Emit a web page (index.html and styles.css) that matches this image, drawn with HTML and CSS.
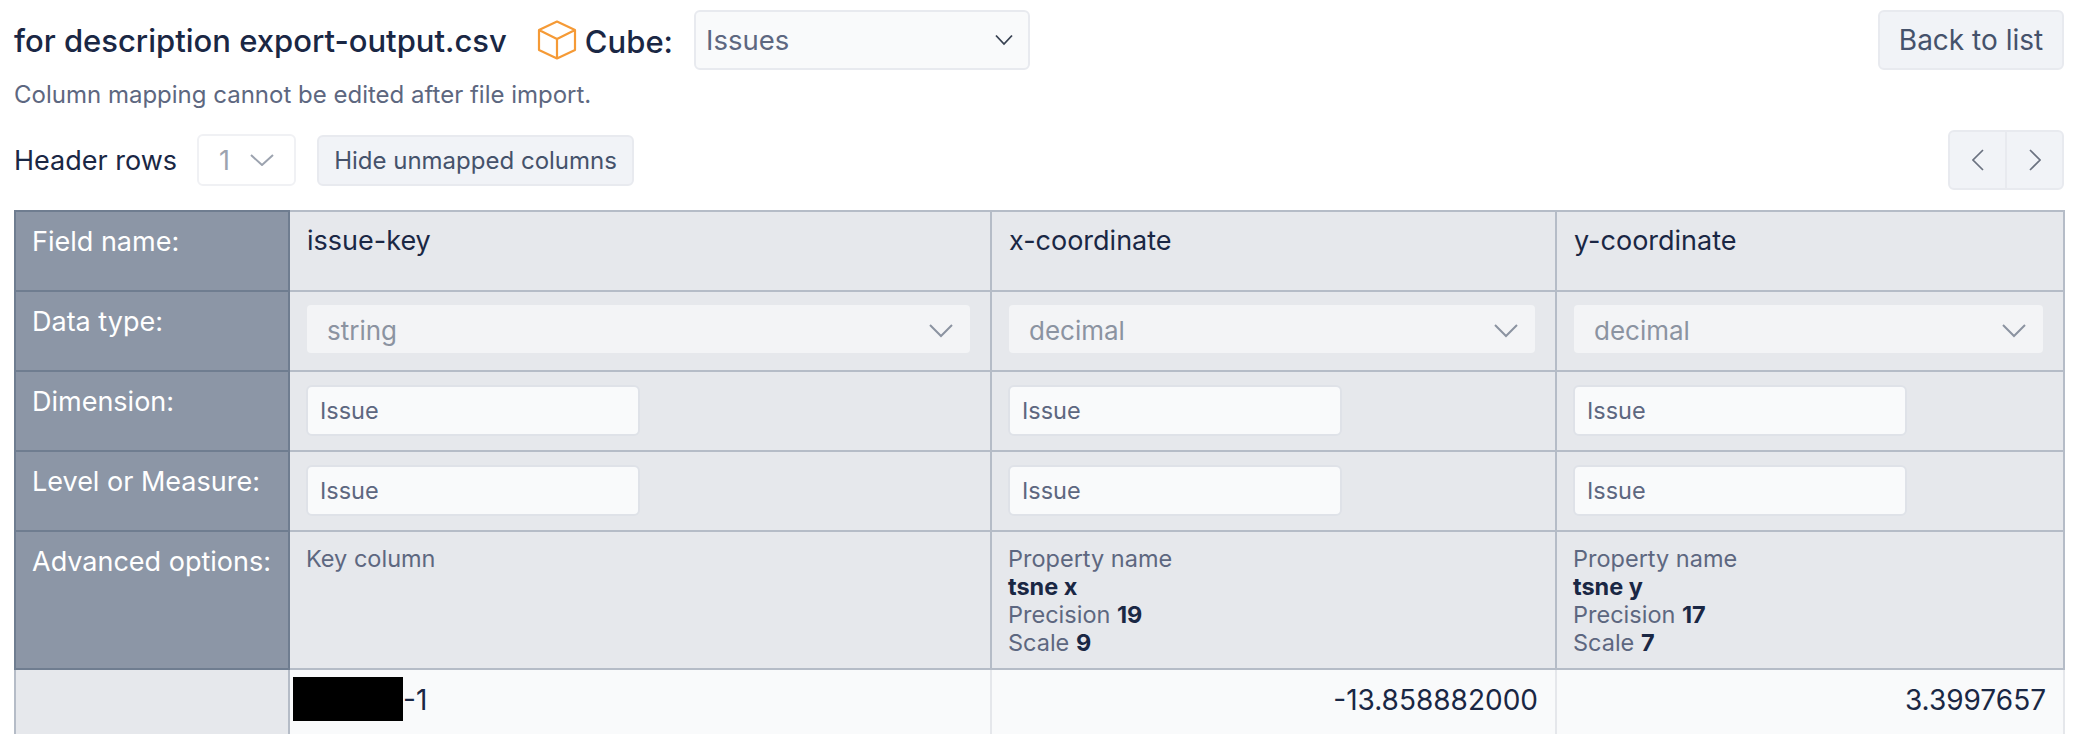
FILE: index.html
```html
<!DOCTYPE html>
<html>
<head>
  <title>Import mapping</title>
  <link rel="stylesheet" href="styles.css">
</head>
<body>
  <div class="top-row">
    <h1>for description export-output.csv</h1>
    <svg class="cube" viewBox="0 0 40 40" width="40" height="40">
      <path d="M20 1.5 L38 10 V30 L20 38.5 L2 30 V10 Z M2 10 L20 19 L38 10 M20 19 V38.5" fill="none" stroke="#f59a36" stroke-width="2.2" stroke-linejoin="round"/>
    </svg>
    <span class="cube-label">Cube:</span>
    <div class="select cube-select">
      <span>Issues</span>
      <svg class="chev" viewBox="0 0 20 12" width="20" height="12"><path d="M2 1.5 L10 10 L18 1.5" fill="none" stroke="#374151" stroke-width="1.8"/></svg>
    </div>
    <button class="btn back">Back to list</button>
  </div>
  <p class="hint">Column mapping cannot be edited after file import.</p>
  <div class="tool-row">
    <span class="rows-label">Header rows</span>
    <div class="select rows-select">
      <span>1</span>
      <svg class="chev" viewBox="0 0 24 12" width="24" height="12"><path d="M1 1 L12 11 L23 1" fill="none" stroke="#9ca3af" stroke-width="2"/></svg>
    </div>
    <button class="btn hide-btn">Hide unmapped columns</button>
    <div class="pager">
      <button class="page-btn">
        <svg viewBox="0 0 12 22" width="12" height="22"><path d="M11 1 L1 11 L11 21" fill="none" stroke="#6b7280" stroke-width="1.7"/></svg>
      </button>
      <button class="page-btn">
        <svg viewBox="0 0 12 22" width="12" height="22"><path d="M1 1 L11 11 L1 21" fill="none" stroke="#6b7280" stroke-width="1.7"/></svg>
      </button>
    </div>
  </div>

  <table class="mapping">
    <colgroup>
      <col class="col-label">
      <col class="col-a">
      <col class="col-b">
      <col class="col-c">
    </colgroup>
    <tr class="row-name">
      <th>Field name:</th>
      <td>issue-key</td>
      <td>x-coordinate</td>
      <td>y-coordinate</td>
    </tr>
    <tr class="row-field">
      <th>Data type:</th>
      <td><div class="select cell-select"><span>string</span><svg class="chev" viewBox="0 0 24 14" width="24" height="14"><path d="M1 1 L12 12 L23 1" fill="none" stroke="#8b93a1" stroke-width="2"/></svg></div></td>
      <td><div class="select cell-select"><span>decimal</span><svg class="chev" viewBox="0 0 24 14" width="24" height="14"><path d="M1 1 L12 12 L23 1" fill="none" stroke="#8b93a1" stroke-width="2"/></svg></div></td>
      <td><div class="select cell-select"><span>decimal</span><svg class="chev" viewBox="0 0 24 14" width="24" height="14"><path d="M1 1 L12 12 L23 1" fill="none" stroke="#8b93a1" stroke-width="2"/></svg></div></td>
    </tr>
    <tr class="row-field">
      <th>Dimension:</th>
      <td><div class="input">Issue</div></td>
      <td><div class="input">Issue</div></td>
      <td><div class="input">Issue</div></td>
    </tr>
    <tr class="row-field">
      <th>Level or Measure:</th>
      <td><div class="input">Issue</div></td>
      <td><div class="input">Issue</div></td>
      <td><div class="input">Issue</div></td>
    </tr>
    <tr class="row-options">
      <th>Advanced options:</th>
      <td>Key column</td>
      <td>Property name<br><b>tsne x</b><br>Precision <b>19</b><br>Scale <b>9</b></td>
      <td>Property name<br><b>tsne y</b><br>Precision <b>17</b><br>Scale <b>7</b></td>
    </tr>
    <tr class="row-data">
      <th></th>
      <td class="key-cell"><span class="redacted"></span>-1</td>
      <td class="num">-13.858882000</td>
      <td class="num">3.3997657</td>
    </tr>
  </table>
</body>
</html>
```

FILE: styles.css
```css
html, body {
  height: 734px;
  overflow: hidden;
}
body {
  margin: 0;
  padding: 10px 10px 0 14px;
  box-sizing: border-box;
  background: #fff;
  color: #1a2744;
  font-family: Inter, "Liberation Sans", sans-serif;
}
svg {
  display: block;
}
.top-row {
  display: flex;
  align-items: center;
  height: 60px;
}
h1 {
  margin: 0;
  font-size: 31px;
  font-weight: 500;
}
.cube {
  margin-left: 30px;
}
.cube-label {
  margin-left: 8px;
  padding-top: 3px;
  font-size: 31px;
  font-weight: 500;
}
.select {
  display: flex;
  align-items: center;
  justify-content: space-between;
  box-sizing: border-box;
  border-radius: 6px;
}
.cube-select {
  width: 336px;
  height: 60px;
  margin-left: 21px;
  padding: 0 14px 0 10px;
  border: 2px solid #e8eaef;
  background: #f9fafb;
  color: #5d6780;
  font-size: 27.5px;
}
.btn {
  box-sizing: border-box;
  border: 2px solid #e8eaef;
  border-radius: 6px;
  background: #f1f3f7;
  color: #45526b;
  font-family: inherit;
}
.back {
  width: 186px;
  height: 60px;
  margin-left: auto;
  font-size: 28px;
}
.hint {
  margin: 9px 0 0;
  height: 32px;
  line-height: 32px;
  color: #5d6780;
  font-size: 24px;
}
.tool-row {
  display: flex;
  align-items: center;
  height: 60px;
  margin-top: 19px;
}
.rows-label {
  font-size: 27px;
}
.rows-select {
  width: 99px;
  height: 52px;
  margin-left: 20px;
  padding: 0 20px;
  border: 2px solid #f0f1f4;
  color: #9ca3af;
  font-size: 27px;
}
.hide-btn {
  width: 317px;
  height: 51px;
  margin-left: 21px;
  font-size: 24px;
}
.pager {
  display: flex;
  box-sizing: border-box;
  height: 60px;
  margin-left: auto;
  border: 2px solid #e8eaef;
  border-radius: 6px;
  background: #f1f3f7;
}
.page-btn {
  display: flex;
  align-items: center;
  justify-content: center;
  width: 55px;
  padding: 0;
  border: 0;
  background: none;
}
.page-btn + .page-btn {
  width: 57px;
  border-left: 2px solid #e8eaef;
}
.mapping {
  width: 2049px;
  margin-top: 20px;
  border-collapse: collapse;
  table-layout: fixed;
}
.col-label {
  width: 274px;
}
.col-a {
  width: 702px;
}
.col-b {
  width: 565px;
}
.col-c {
  width: 508px;
}
.mapping th,
.mapping td {
  padding: 13px 20px 10px 17px;
  border: 2px solid #b5bcc7;
  vertical-align: top;
  box-sizing: border-box;
}
.mapping th {
  padding: 14px 0 10px 16px;
  border-color: #6f7d90;
  background: #8c96a6;
  color: #fff;
  font-size: 27px;
  font-weight: 400;
  line-height: 32px;
  text-align: left;
  white-space: nowrap;
}
.mapping td {
  background: #e6e8ec;
  font-size: 27px;
  line-height: 32px;
}
.row-name,
.row-field {
  height: 80px;
}
.row-options {
  height: 138px;
}
.row-options td {
  padding-left: 16px;
  color: #5d6780;
  font-size: 23.5px;
  line-height: 28px;
}
.row-options b {
  color: #1a2744;
  font-weight: 700;
}
.cell-select {
  height: 48px;
  padding: 3px 17px 0 20px;
  border-radius: 4px;
  background: #f3f4f6;
  color: #8b93a1;
  font-size: 26px;
}
.input {
  box-sizing: border-box;
  width: 334px;
  height: 51px;
  margin-left: -1px;
  padding: 0 12px;
  border: 2px solid #dfe2e8;
  border-radius: 6px;
  background: #f9fafb;
  color: #5d6780;
  font-size: 23.5px;
  line-height: 48px;
}
.row-data {
  height: 66px;
}
.mapping .row-data th {
  border-color: #b5bcc7;
  border-bottom: 0;
  background: #e6e8ec;
}
.mapping .row-data td {
  padding-top: 14px;
  border-color: #b5bcc7 #e5e7eb transparent #e5e7eb;
  background: #f9fafb;
  font-size: 28px;
}
.mapping .row-data .key-cell {
  padding-left: 3px;
  padding-top: 7px;
}
.redacted {
  display: inline-block;
  width: 110px;
  height: 44px;
  vertical-align: -11px;
  background: #000;
}
.mapping .num {
  padding-right: 17px;
  text-align: right;
}
```
